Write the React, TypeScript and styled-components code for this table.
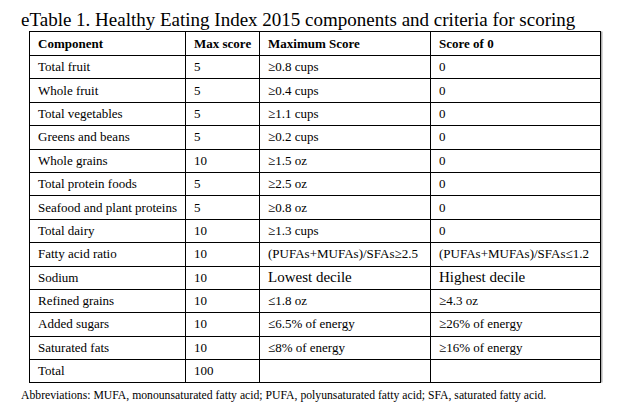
import * as React from "react";
import styled, { createGlobalStyle } from "styled-components";

const serif = `"Liberation Serif", "Times New Roman", serif`;

const GlobalStyle = createGlobalStyle`
  body {
    margin: 0;
    background: #ffffff;
    font-family: ${serif};
    color: #000000;
  }
`;

const Page = styled.div`
  padding: 9px 0 0 21px;
  width: 640px;
  height: 413px;
  box-sizing: border-box;
  font-family: ${serif};
`;

const Title = styled.div`
  font-family: ${serif};
  font-size: 19px;
  line-height: 22px;
  white-space: nowrap;
`;

const Table = styled.table`
  margin-left: 8px;
  width: 571px;
  border-collapse: collapse;
  table-layout: fixed;
  font-family: ${serif};
  box-shadow: 2px 0 0 -0.5px #b0b0b0;
`;

const HeadCell = styled.th`
  border: 1px solid #000;
  height: 23px;
  padding: 0 0 0 8px;
  font-family: ${serif};
  font-size: 13px;
  font-weight: bold;
  text-align: left;
  white-space: nowrap;
`;

const Cell = styled.td<{ $large?: boolean }>`
  border: 1px solid #000;
  height: 22.4px;
  padding: 0 0 0 8px;
  font-family: ${serif};
  font-size: ${(p) => (p.$large ? "15px" : "13px")};
  white-space: nowrap;
  vertical-align: middle;
`;

const Footnote = styled.div`
  margin-top: 6px;
  font-family: ${serif};
  font-size: 11.7px;
  line-height: 14px;
  white-space: nowrap;
`;

interface Row {
  component: string;
  max: string;
  maxScore: string;
  zero: string;
  large?: boolean;
}

const rows: Row[] = [
  { component: "Total fruit", max: "5", maxScore: "≥0.8 cups", zero: "0" },
  { component: "Whole fruit", max: "5", maxScore: "≥0.4 cups", zero: "0" },
  { component: "Total vegetables", max: "5", maxScore: "≥1.1 cups", zero: "0" },
  { component: "Greens and beans", max: "5", maxScore: "≥0.2 cups", zero: "0" },
  { component: "Whole grains", max: "10", maxScore: "≥1.5 oz", zero: "0" },
  { component: "Total protein foods", max: "5", maxScore: "≥2.5 oz", zero: "0" },
  { component: "Seafood and plant proteins", max: "5", maxScore: "≥0.8 oz", zero: "0" },
  { component: "Total dairy", max: "10", maxScore: "≥1.3 cups", zero: "0" },
  {
    component: "Fatty acid ratio",
    max: "10",
    maxScore: "(PUFAs+MUFAs)/SFAs≥2.5",
    zero: "(PUFAs+MUFAs)/SFAs≤1.2",
  },
  { component: "Sodium", max: "10", maxScore: "Lowest decile", zero: "Highest decile", large: true },
  { component: "Refined grains", max: "10", maxScore: "≤1.8 oz", zero: "≥4.3 oz" },
  { component: "Added sugars", max: "10", maxScore: "≤6.5% of energy", zero: "≥26% of energy" },
  { component: "Saturated fats", max: "10", maxScore: "≤8% of energy", zero: "≥16% of energy" },
  { component: "Total", max: "100", maxScore: "", zero: "" },
];

export default function App() {
  return (
    <Page>
      <GlobalStyle />
      <Title>eTable 1. Healthy Eating Index 2015 components and criteria for scoring</Title>
      <Table>
        <colgroup>
          <col style={{ width: 156 }} />
          <col style={{ width: 74 }} />
          <col style={{ width: 171 }} />
          <col style={{ width: 170 }} />
        </colgroup>
        <thead>
          <tr>
            <HeadCell>Component</HeadCell>
            <HeadCell>Max score</HeadCell>
            <HeadCell>Maximum Score</HeadCell>
            <HeadCell>Score of 0</HeadCell>
          </tr>
        </thead>
        <tbody>
          {rows.map((r) => (
            <tr key={r.component}>
              <Cell>{r.component}</Cell>
              <Cell>{r.max}</Cell>
              <Cell $large={r.large}>{r.maxScore}</Cell>
              <Cell $large={r.large}>{r.zero}</Cell>
            </tr>
          ))}
        </tbody>
      </Table>
      <Footnote>
        Abbreviations: MUFA, monounsaturated fatty acid; PUFA, polyunsaturated fatty acid; SFA, saturated fatty acid.
      </Footnote>
    </Page>
  );
}
